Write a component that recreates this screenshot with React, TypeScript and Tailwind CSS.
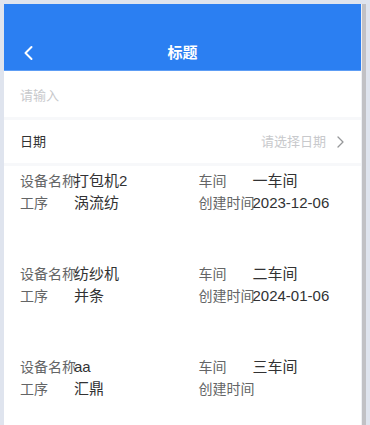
import React from "react";

const items = [
  { name: "打包机2", shop: "一车间", process: "涡流纺", created: "2023-12-06" },
  { name: "纺纱机", shop: "二车间", process: "并条", created: "2024-01-06" },
  { name: "aa", shop: "三车间", process: "汇鼎", created: "" },
];

function Field({ label, value }: { label: string; value: string }) {
  return (
    <div className="flex w-1/2 pl-4 h-[22px] items-center">
      <span className="w-[54px] shrink-0 whitespace-nowrap text-[14px] text-[#646566]">{label}</span>
      <span className="text-[15px] text-[#323233] whitespace-nowrap">{value}</span>
    </div>
  );
}

export default function App() {
  return (
    <div
      className="min-h-[425px] h-[425px] overflow-hidden bg-[#dfe4ee] pl-1 pt-1"
      style={{ fontFamily: '"Liberation Sans", "Noto Sans CJK SC", sans-serif' }}
    >
      <div className="flex w-[362px] h-full">
        <div className="w-[357px] bg-white">
          <div className="h-[67px] bg-[#2b7ff2] border-b border-[#5d9df5] flex items-end pb-[5px]">
            <div className="w-full h-[24px] flex items-center justify-center relative">
              <svg className="absolute left-[18px]" width="14" height="16" viewBox="0 0 14 16" fill="none">
                <path d="M9.5 2 L3.5 8 L9.5 14" stroke="white" strokeWidth="2" strokeLinecap="round" strokeLinejoin="round" />
              </svg>
              <span className="text-white text-[15px] font-bold">标题</span>
            </div>
          </div>
          <div className="h-[46px] flex items-center px-4 pt-[4px] text-[13px] text-[#c8c9cc]">请输入</div>
          <div className="h-[3px] bg-[#f7f8fa]" />
          <div className="h-[43px] flex items-center justify-between pl-4 pr-4 text-[13px]">
            <span className="text-[#323233]">日期</span>
            <div className="flex items-center gap-[10px]">
              <span className="text-[#c8c9cc]">请选择日期</span>
              <svg width="9" height="14" viewBox="0 0 9 14" fill="none">
                <path d="M2 2 L7 7 L2 12" stroke="#969799" strokeWidth="1.3" strokeLinecap="round" strokeLinejoin="round" />
              </svg>
            </div>
          </div>
          <div className="h-[3px] bg-[#f7f8fa]" />
          <div className="pt-[4px]">
            {items.map((it, i) => (
              <div key={i} className="h-[93px]">
                <div className="flex">
                  <Field label="设备名称" value={it.name} />
                  <Field label="车间" value={it.shop} />
                </div>
                <div className="flex">
                  <Field label="工序" value={it.process} />
                  <Field label="创建时间" value={it.created} />
                </div>
              </div>
            ))}
          </div>
        </div>
        <div className="w-[5px] bg-[#c1c1c5] border-l border-[#eef0f4]" />
      </div>
    </div>
  );
}
